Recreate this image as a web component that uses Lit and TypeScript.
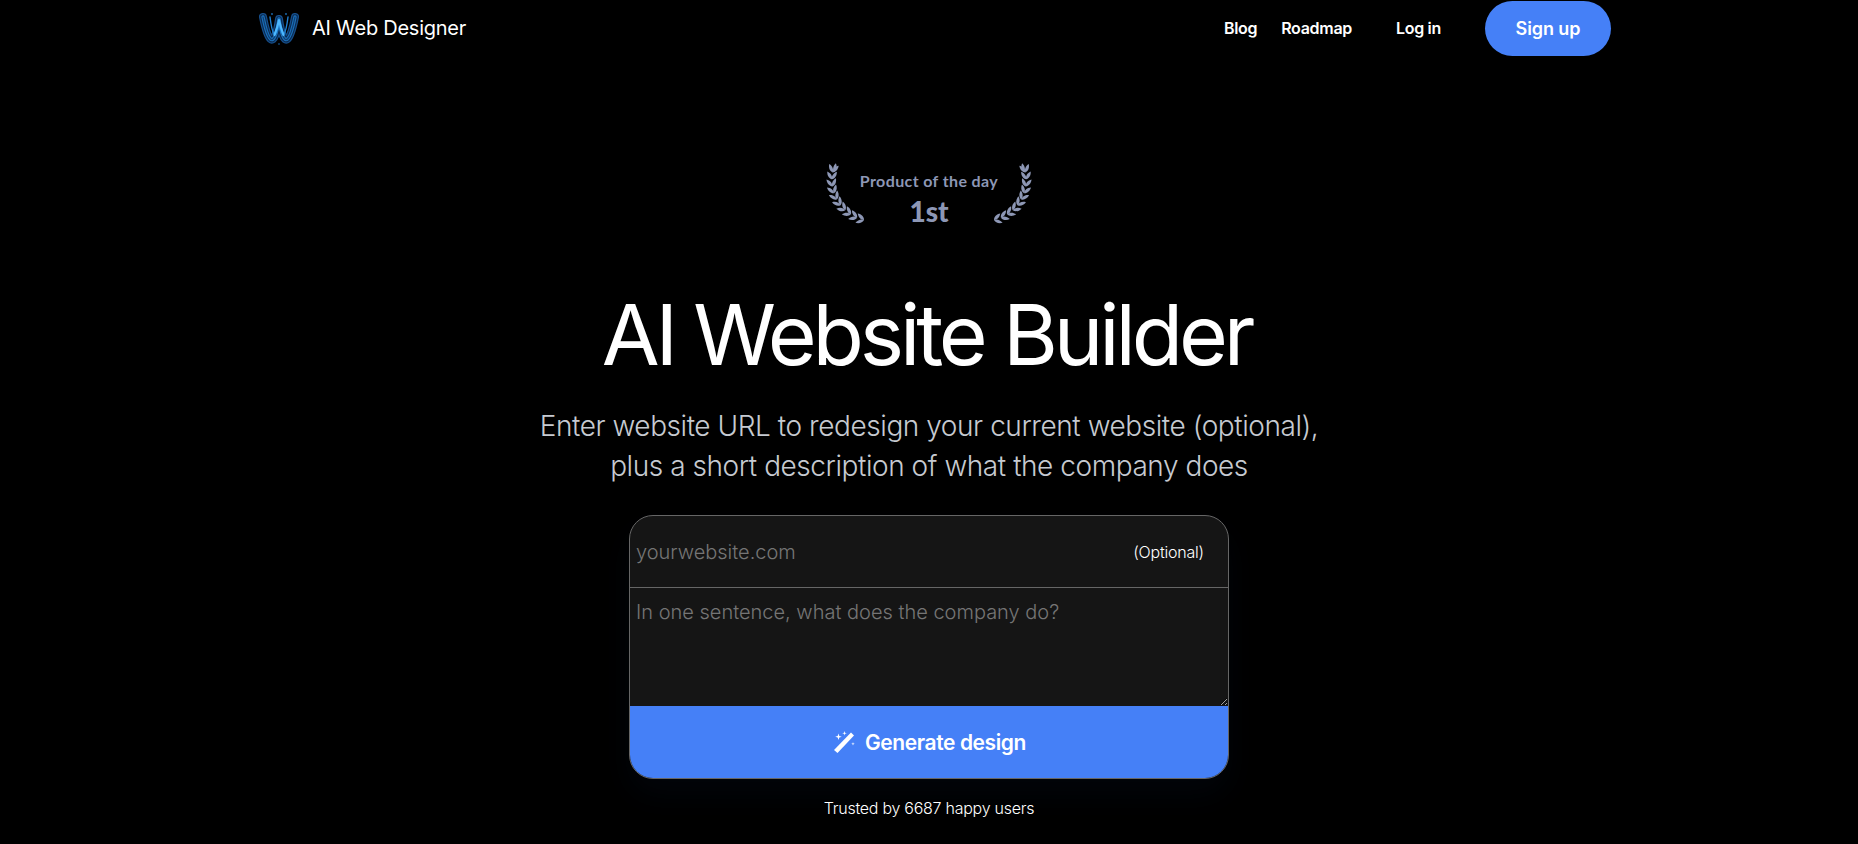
import { LitElement, html, css, svg } from 'lit';
import { customElement } from 'lit/decorators.js';

// laurel stem as a cubic, from the bottom end up to the tip
const STEM = [[38, 58], [14, 52], [-1, 28], [9, 2]];

const stemAt = (t: number) => {
  const u = 1 - t;
  const w = [u * u * u, 3 * u * u * t, 3 * u * t * t, t * t * t];
  const d = [-3 * u * u, 3 * u * u - 6 * u * t, 6 * u * t - 3 * t * t, 3 * t * t];
  const sum = (k: number[], i: number) => k.reduce((acc, v, n) => acc + v * STEM[n][i], 0);
  const angle = (Math.atan2(sum(d, 1), sum(d, 0)) * 180) / Math.PI + 90;
  return { x: sum(w, 0), y: sum(w, 1), angle };
};

const LEAF = 'M0 0 C -2.2 -2 -2.2 -6 0 -9 C 2.2 -6 2.2 -2 0 0Z';

const laurel = () => svg`
  ${[0, 0.1, 0.2, 0.3, 0.4, 0.5, 0.6, 0.7, 0.8, 0.89].map((t) => {
    const { x, y, angle } = stemAt(t);
    return svg`
      <path transform="translate(${x} ${y}) rotate(${angle - 32})" d=${LEAF} />
      <path transform="translate(${x} ${y}) rotate(${angle + 32})" d=${LEAF} />
    `;
  })}
  <path transform="translate(8 10) rotate(12)" d=${LEAF} />
`;

const W_OUTER = 'M5 6 C 7 16 9 25 12.5 28 C 16 31 19 22 21 8 C 23 22 26 31 29.5 28 C 33 25 35 16 37 6';
const W_INNER = 'M12 6 C 13 14 14 20 16 23 C 18 25 20 18 21 13 C 22 18 24 25 26 23 C 28 20 29 14 30 6';

@customElement('app-root')
export class AppRoot extends LitElement {
  static styles = css`
    :host {
      display: block;
      height: 844px;
      overflow: hidden;
      background: #000;
      color: #fff;
      font-family: Inter, "Liberation Sans", sans-serif;
    }

    .nav {
      display: flex;
      align-items: center;
      justify-content: space-between;
      height: 56px;
      padding: 0 247px 0 258px;
    }

    .brand {
      display: flex;
      align-items: center;
      gap: 12px;
      font-size: 20px;
      font-weight: 400;
      letter-spacing: -0.25px;
    }

    .brand svg {
      width: 42px;
      height: 34px;
    }

    .links {
      display: flex;
      align-items: center;
      font-size: 16px;
      font-weight: 600;
      letter-spacing: -0.3px;
    }

    .links .roadmap {
      margin-left: 24px;
    }

    .links .login {
      margin-left: 44px;
    }

    .signup {
      margin-left: 44px;
      display: flex;
      align-items: center;
      justify-content: center;
      width: 126px;
      height: 55px;
      border-radius: 28px;
      background: #4580f7;
      font-size: 18px;
      letter-spacing: -0.1px;
    }

    .hero {
      display: flex;
      flex-direction: column;
      align-items: center;
    }

    .badge {
      display: flex;
      align-items: flex-start;
      height: 62px;
      margin-top: 106px;
      color: #8d97b5;
    }

    .badge svg {
      width: 40px;
      height: 62px;
      fill: currentColor;
    }

    .badge svg.right {
      transform: scaleX(-1);
    }

    .badge-text {
      width: 126px;
      padding-top: 10px;
      text-align: center;
      white-space: nowrap;
      display: flex;
      flex-direction: column;
      align-items: center;
      font-family: Lato, "Noto Sans", sans-serif;
      font-weight: 700;
      font-size: 16px;
      line-height: 18px;
      letter-spacing: 0.38px;
    }

    .badge-text b {
      font-size: 28px;
      line-height: 42px;
      letter-spacing: 0;
    }

    h1 {
      margin: 61px 0 0;
      padding-right: 5px;
      font-size: 84px;
      line-height: 100px;
      font-weight: 400;
      letter-spacing: -4.15px;
    }

    .sub {
      margin: 21px 0 0;
      text-align: center;
      font-size: 28px;
      line-height: 40px;
      font-weight: 300;
      letter-spacing: -0.44px;
      color: #c6cad1;
    }

    .frame {
      margin-top: 29px;
      border-radius: 24px;
      box-shadow: 0 16px 32px rgba(30, 70, 130, 0.08);
    }

    form {
      display: flex;
      flex-direction: column;
      box-sizing: border-box;
      width: 600px;
      height: 264px;
      border: 1px solid #666;
      border-radius: 24px;
      overflow: hidden;
      background: #151515;
    }

    .url {
      display: flex;
      align-items: center;
      flex: none;
      height: 71px;
      padding: 0 24px 0 6px;
      border-bottom: 1px solid #666;
    }

    input,
    textarea {
      flex: 1;
      border: 0;
      outline: 0;
      background: transparent;
      color: #fff;
      font-family: inherit;
      font-size: 20px;
      font-weight: 300;
      padding: 0;
    }

    input::placeholder,
    textarea::placeholder {
      color: #757575;
      opacity: 1;
    }

    .optional {
      font-size: 16px;
      font-weight: 300;
      letter-spacing: -0.2px;
      color: #fff;
    }

    textarea {
      display: block;
      box-sizing: border-box;
      width: 100%;
      height: 118px;
      flex: none;
      padding: 12px 6px;
      line-height: 24px;
    }

    .generate {
      flex: 1;
      display: flex;
      align-items: center;
      justify-content: center;
      gap: 9px;
      border: 0;
      background: #4580f7;
      color: #fff;
      font-family: inherit;
      font-size: 21px;
      font-weight: 600;
      letter-spacing: -0.4px;
    }

    .generate svg {
      width: 24px;
      height: 24px;
    }

    .trusted {
      margin-top: 19px;
      font-size: 16px;
      font-weight: 300;
      line-height: 20px;
      letter-spacing: -0.26px;
    }
  `;

  render() {
    return html`
      <header class="nav">
        <div class="brand">
          <svg viewBox="0 0 42 34" fill="none" stroke-linecap="round" stroke-linejoin="round">
            <path d=${W_OUTER} stroke="#164f8c" stroke-width="8" />
            <path d=${W_OUTER} stroke="#0a2a50" stroke-width="5.6" />
            <path d=${W_OUTER} stroke="#1b6fb8" stroke-width="3.4" />
            <path d=${W_OUTER} stroke="#0e3d70" stroke-width="1.2" />
            <path d=${W_INNER} stroke="#1f7fd0" stroke-width="1.4" />
            <path d="M16.5 24 C 18 20 20 14 21 9 C 22 14 24 20 25.5 24" stroke="#4db8ff" stroke-width="2.2" />
            <circle cx="14" cy="3" r="0.9" fill="#1b6fb8" />
            <circle cx="28" cy="3" r="0.9" fill="#1b6fb8" />
            <circle cx="21" cy="33" r="0.8" fill="#1b6fb8" />
          </svg>
          <span>AI Web Designer</span>
        </div>
        <nav class="links">
          <a>Blog</a>
          <a class="roadmap">Roadmap</a>
          <a class="login">Log in</a>
          <a class="signup">Sign up</a>
        </nav>
      </header>
      <main class="hero">
        <div class="badge">
          <svg viewBox="0 0 40 62">${laurel()}</svg>
          <div class="badge-text">Product of the day<b>1st</b></div>
          <svg class="right" viewBox="0 0 40 62">${laurel()}</svg>
        </div>
        <h1>AI Website Builder</h1>
        <p class="sub">Enter website URL to redesign your current website (optional),<br />plus a short description of what the company does</p>
        <div class="frame">
          <form>
            <div class="url">
              <input placeholder="yourwebsite.com" />
              <span class="optional">(Optional)</span>
            </div>
            <textarea placeholder="In one sentence, what does the company do?"></textarea>
            <button class="generate" type="button">
              <svg viewBox="0 0 24 24" fill="#fff">
                <path d="M19 2.5 L22 5.5 L5.5 23 L2 20Z" />
                <path d="M6.5 3.5 L7.3 6 L9.8 6.8 L7.3 7.6 L6.5 10 L5.7 7.6 L3.2 6.8 L5.7 6Z" />
                <path d="M12.5 1 L13 2.8 L14.8 3.3 L13 3.8 L12.5 5.6 L12 3.8 L10.2 3.3 L12 2.8Z" />
                <path d="M21 12 L21.4 13.4 L22.8 13.8 L21.4 14.2 L21 15.6 L20.6 14.2 L19.2 13.8 L20.6 13.4Z" />
              </svg>
              Generate design
            </button>
          </form>
        </div>
        <div class="trusted">Trusted by 6687 happy users</div>
      </main>
    `;
  }
}
